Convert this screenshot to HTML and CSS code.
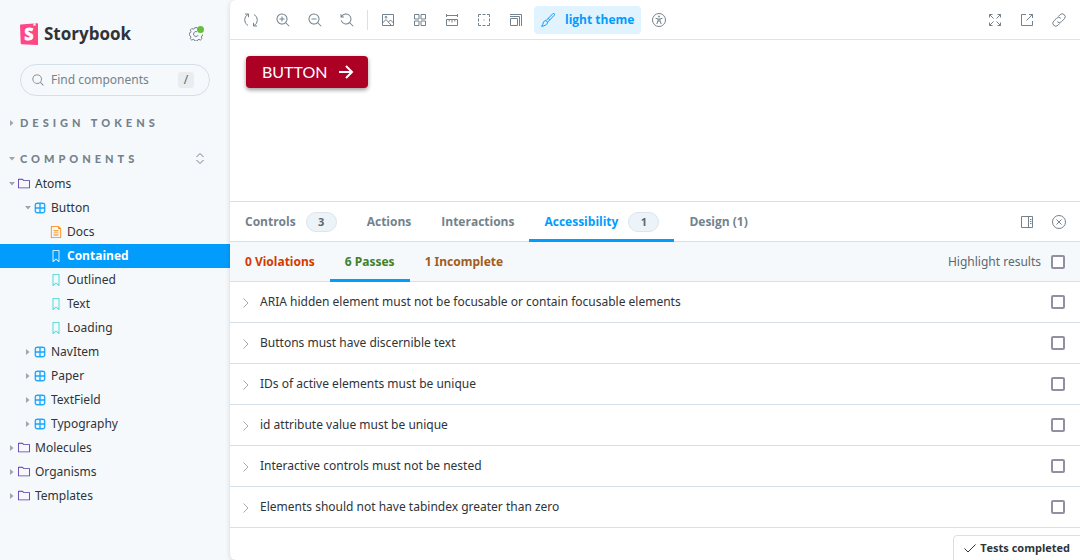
FILE: index.html
```html
<!DOCTYPE html>
<html lang="en">
<head>
<meta charset="utf-8">
<title>Storybook</title>
<link rel="stylesheet" href="styles.css">
</head>
<body>
<svg class="sprite" aria-hidden="true">
  <symbol id="folder" viewBox="0 0 14 14"><path d="M6.586 3.504l-1.5-1.5H1v9h12v-7.5H6.586zm.414-1L5.793 1.297a1 1 0 00-.707-.293H.5a.5.5 0 00-.5.5v10a.5.5 0 00.5.5h13a.5.5 0 00.5-.5v-8.5a.5.5 0 00-.5-.5H7z" fill-rule="evenodd"/></symbol>
  <symbol id="component" viewBox="0 0 14 14"><path d="M3.5 1.004a2.5 2.5 0 00-2.5 2.5v7a2.5 2.5 0 002.5 2.5h7a2.5 2.5 0 002.5-2.5v-7a2.5 2.5 0 00-2.5-2.5h-7zm8.5 5.5H7.5v-4.5h3a1.5 1.5 0 011.5 1.5v3zm0 1v3a1.5 1.5 0 01-1.5 1.5h-3v-4.5H12zm-5.5 4.5v-4.5H2v3a1.5 1.5 0 001.500 1.500h3zM2 6.504h4.500v-4.500h-3a1.500 1.500 0 00-1.500 1.500v3z" fill-rule="evenodd" stroke="currentColor" stroke-width=".4"/></symbol>
  <symbol id="bookmark" viewBox="0 0 14 14"><path d="M3.5 0h7a.5.5 0 01.5.5v13a.5.5 0 01-.454.498.462.462 0 01-.371-.118L7 11.159l-3.175 2.72a.46.46 0 01-.379.118A.5.5 0 013 13.5V.5a.5.5 0 01.5-.5zM4 12.413l2.664-2.284a.454.454 0 01.377-.128.498.498 0 01.284.12L10 12.412V1H4v11.413z" fill-rule="evenodd"/></symbol>
  <symbol id="document" viewBox="0 0 14 14"><path d="M4 5.5a.5.5 0 01.5-.5h5a.5.5 0 010 1h-5a.5.5 0 01-.5-.5zM4.5 7.5a.5.5 0 000 1h5a.5.5 0 000-1h-5zM4 10.5a.5.5 0 01.5-.5h5a.5.5 0 010 1h-5a.5.5 0 01-.5-.5z"/><path d="M1.5 0a.5.5 0 00-.5.5v13a.5.5 0 00.5.5h11a.5.5 0 00.5-.5V3.207a.5.5 0 00-.146-.353L10.146.146A.5.5 0 009.793 0H1.5zM2 1h7.5v2a.5.5 0 00.5.5h2V13H2V1z" fill-rule="evenodd"/></symbol>
  <symbol id="search" viewBox="0 0 14 14"><path d="M9.544 10.206a5.5 5.5 0 11.662-.662.5.5 0 01.148.102l3 3a.5.5 0 01-.708.708l-3-3a.5.5 0 01-.102-.148zM10.5 6a4.5 4.5 0 11-9 0 4.5 4.5 0 019 0z" fill-rule="evenodd"/></symbol>
  <symbol id="zoom-reset" viewBox="0 0 14 14"><path d="M1.5 2.837V1.5a.5.5 0 00-1 0V4a.5.5 0 00.5.5h2.5a.5.5 0 000-1H2.258a4.5 4.5 0 11-.496 4.016.5.5 0 10-.942.337 5.502 5.502 0 008.724 2.353.5.5 0 00.102.148l3 3a.5.5 0 00.708-.708l-3-3a.5.5 0 00-.148-.102A5.5 5.5 0 101.5 2.837z"/></symbol>
  <symbol id="caret" viewBox="0 0 8 8"><path d="M2 1v6l3.500-3z"/></symbol>
</svg>
<div class="app">
  <nav class="sidebar" aria-label="Stories">
    <header class="brand">
      <svg class="logo" viewBox="0 0 18 22" aria-hidden="true"><path d="M.7 1.400 17 .2a.8.8 0 0 1 1 .8v20a.8.8 0 0 1-.9.9L1.500 21.200a.9.9 0 0 1-.8-.9L0 2.200a.8.8 0 0 1 .7-.8z" fill="#ff4785"/><path d="m13.500.4-.1 2.600 1.100-.8 1 .7V.3z" fill="#fff"/><text x="9" y="17" text-anchor="middle" class="logo-letter">S</text></svg>
      <h1 class="brand-name">Storybook</h1>
      <button class="settings" aria-label="Settings">
        <svg class="icon line" viewBox="0 0 14 14"><path d="M8 4.700a2.500 2.500 0 1 0 1.300 3.300"/><path d="M8.600 1.800 8.300.7H5.700L5.300 1.800 4.200 2.200 2.900 1.400 1.200 3.100l.8 1.400-.5 1.200L.3 6v2.200l1 .6.6 1.300-.7 1.400 1.600 1.600 1.400-.8 1.200.5.500 1.200h2.300l.5-1.100 1.300-.5 1.400.7 1.600-1.500-.7-1.500.5-1.200 1.300-.6V6.800"/></svg>
        <span class="dot"></span>
      </button>
    </header>
    <div class="search">
      <svg class="search-icon"><use href="#search"/></svg>
      <input type="text" class="search-input" aria-label="Find components" placeholder="Find components">
      <kbd class="key">/</kbd>
    </div>
    <div class="section"><button class="heading"><svg class="caret"><use href="#caret"/></svg>DESIGN TOKENS</button></div>
    <div class="section">
      <button class="heading"><svg class="caret open"><use href="#caret"/></svg>COMPONENTS</button>
      <button class="expand" aria-label="Expand all"><svg class="icon line" viewBox="0 0 14 14"><path d="M3.500 5 7 1.500l3.500 3.500M3.500 8 7 11.500l3.500-3.500"/></svg></button>
    </div>
    <div class="tree">
      <a class="node" href="#"><svg class="caret open"><use href="#caret"/></svg><svg class="glyph purple"><use href="#folder"/></svg>Atoms</a>
      <a class="node child" href="#"><svg class="caret open"><use href="#caret"/></svg><svg class="glyph blue"><use href="#component"/></svg>Button</a>
      <a class="node leaf" href="#"><svg class="glyph orange"><use href="#document"/></svg>Docs</a>
      <a class="node leaf selected" href="#"><svg class="glyph"><use href="#bookmark"/></svg>Contained</a>
      <a class="node leaf" href="#"><svg class="glyph teal"><use href="#bookmark"/></svg>Outlined</a>
      <a class="node leaf" href="#"><svg class="glyph teal"><use href="#bookmark"/></svg>Text</a>
      <a class="node leaf" href="#"><svg class="glyph teal"><use href="#bookmark"/></svg>Loading</a>
      <a class="node child" href="#"><svg class="caret"><use href="#caret"/></svg><svg class="glyph blue"><use href="#component"/></svg>NavItem</a>
      <a class="node child" href="#"><svg class="caret"><use href="#caret"/></svg><svg class="glyph blue"><use href="#component"/></svg>Paper</a>
      <a class="node child" href="#"><svg class="caret"><use href="#caret"/></svg><svg class="glyph blue"><use href="#component"/></svg>TextField</a>
      <a class="node child" href="#"><svg class="caret"><use href="#caret"/></svg><svg class="glyph blue"><use href="#component"/></svg>Typography</a>
      <a class="node" href="#"><svg class="caret"><use href="#caret"/></svg><svg class="glyph purple"><use href="#folder"/></svg>Molecules</a>
      <a class="node" href="#"><svg class="caret"><use href="#caret"/></svg><svg class="glyph purple"><use href="#folder"/></svg>Organisms</a>
      <a class="node" href="#"><svg class="caret"><use href="#caret"/></svg><svg class="glyph purple"><use href="#folder"/></svg>Templates</a>
    </div>
  </nav>
  <main class="main">
    <div class="toolbar">
      <button class="tool" aria-label="Remount"><svg class="icon line" viewBox="0 0 14 14"><path d="M1 1h3.500v3.200M4.300 1.200A6.300 6.300 0 0 0 4 12.500M13 13H9.500V9.800M9.700 12.800A6.300 6.300 0 0 0 10 1.500"/></svg></button>
      <button class="tool" aria-label="Zoom in"><svg class="icon" viewBox="0 0 14 14"><use href="#search"/><path d="M5.500 3.500h1v2h2v1h-2v2h-1v-2h-2v-1h2z"/></svg></button>
      <button class="tool" aria-label="Zoom out"><svg class="icon" viewBox="0 0 14 14"><use href="#search"/><path d="M3.500 5.500h5v1h-5z"/></svg></button>
      <button class="tool" aria-label="Reset zoom"><svg class="icon"><use href="#zoom-reset"/></svg></button>
      <span class="divider"></span>
      <button class="tool" aria-label="Background"><svg class="icon line" viewBox="0 0 14 14"><path d="M1.500 1.500h11v11h-11zM1.500 10 5 6.500l5 5.500M7.500 9 9.500 7l3 3"/><circle cx="5" cy="4.200" r=".9"/></svg></button>
      <button class="tool" aria-label="Grid"><svg class="icon line" viewBox="0 0 14 14"><path d="M1.500 1.500h4.500v4.500h-4.500zM8 1.500h4.500v4.500h-4.500zM1.500 8h4.500v4.500h-4.500zM8 8h4.500v4.500h-4.500z"/></svg></button>
      <button class="tool" aria-label="Measure"><svg class="icon line" viewBox="0 0 14 14"><path d="M1.500 1v3M12.500 1v3M1.500 2.500h11M1.500 6.500h11v6h-11zM4.200 6.500v2M7 6.500v3M9.800 6.500v2"/></svg></button>
      <button class="tool" aria-label="Outline"><svg class="icon line" viewBox="0 0 14 14"><path d="M1.500 4V1.500H4M10 1.500h2.500V4M12.500 10v2.500H10M4 12.500H1.500V10M5.500 1.500h3M5.500 12.500h3M1.500 5.500v3M12.500 5.500v3M6.500 7h1"/></svg></button>
      <button class="tool" aria-label="Viewport"><svg class="icon line" viewBox="0 0 14 14"><path d="M1.500 5.500h7v7h-7zM1 3.500h9.500V13M1 1.500h11.500V13"/></svg></button>
      <button class="tool theme"><svg class="icon line" viewBox="0 0 14 14"><path d="M13.300.7c-.5-.4-1.200-.3-1.600.1L5 7.600l1.500 1.600L13.300 2.300c.4-.5.4-1.200 0-1.600zM5 7.600c-1.400 0-2.400.8-2.700 2.200-.2 1.200-.7 2.200-1.700 3.500 1.500-.1 3-.5 4.300-1.400 1-.7 1.600-1.600 1.600-2.700M7.200 5.400l1.500 1.500"/></svg>light theme</button>
      <button class="tool" aria-label="Vision simulator"><svg class="icon line" viewBox="0 0 14 14"><circle cx="7" cy="7" r="6.500"/><circle cx="7" cy="3.500" r=".6"/><path d="M3.500 5.200 6 6v1.800L4.800 11M10.500 5.200 8 6v1.800L9.200 11M6 6h2M6 8h2"/></svg></button>
      <span class="spacer"></span>
      <button class="tool" aria-label="Full screen"><svg class="icon line" viewBox="0 0 14 14"><path d="M1.500 4.500v-3h3M9.500 1.500h3v3M12.500 9.500v3h-3M4.500 12.500h-3v-3M1.500 1.500l4 4M12.500 1.500l-4 4M12.500 12.500l-4-4M1.500 12.500l4-4"/></svg></button>
      <button class="tool" aria-label="Open in new tab"><svg class="icon line" viewBox="0 0 14 14"><path d="M6 1.500H1.500v11h11V8M9 1.500h3.500V5M12.500 1.500l-6 6"/></svg></button>
      <button class="tool" aria-label="Copy link"><svg class="icon line" viewBox="0 0 14 14"><path d="m6.200 3.600 1.900-1.900a2.900 2.900 0 0 1 4.200 4.200L9.400 8.700a2.900 2.900 0 0 1-4.200 0M7.800 10.400l-1.900 1.900a2.900 2.900 0 0 1-4.200-4.200l2.900-2.800a2.900 2.900 0 0 1 4.200 0"/></svg></button>
    </div>
    <section class="canvas">
      <button class="contained">BUTTON<svg class="arrow" viewBox="0 0 16 16"><path d="M1 8h13M8 2l6 6-6 6"/></svg></button>
    </section>
    <section class="panel">
      <div class="tabs">
        <button class="tab">Controls<span class="badge">3</span></button>
        <button class="tab">Actions</button>
        <button class="tab">Interactions</button>
        <button class="tab active">Accessibility<span class="badge">1</span></button>
        <button class="tab">Design (1)</button>
        <span class="spacer"></span>
        <button class="tool" aria-label="Change orientation"><svg class="icon line" viewBox="0 0 14 14"><path d="M1.500 1.500h11v11h-11zM8.500 1.500v11M10 4.500h1.500M10 6.500h1.500M10 8.500h1.500"/></svg></button>
        <button class="tool" aria-label="Hide addons"><svg class="icon line" viewBox="0 0 14 14"><circle cx="7" cy="7" r="6.500"/><path d="m4.500 4.500 5 5M9.500 4.500l-5 5"/></svg></button>
      </div>
      <div class="tabs results">
        <button class="tab red">0 Violations</button>
        <button class="tab green active">6 Passes</button>
        <button class="tab brown">1 Incomplete</button>
        <span class="spacer"></span>
        <label class="highlight">Highlight results<input class="check" type="checkbox"></label>
      </div>
      <div class="rule"><button class="rule-name" id="r1"><svg class="chevron" viewBox="0 0 10 12"><path d="M3.500 2.500 8 7l-4.500 4.500"/></svg>ARIA hidden element must not be focusable or contain focusable elements</button><input class="check" type="checkbox" aria-labelledby="r1"></div>
      <div class="rule"><button class="rule-name" id="r2"><svg class="chevron" viewBox="0 0 10 12"><path d="M3.500 2.500 8 7l-4.500 4.500"/></svg>Buttons must have discernible text</button><input class="check" type="checkbox" aria-labelledby="r2"></div>
      <div class="rule"><button class="rule-name" id="r3"><svg class="chevron" viewBox="0 0 10 12"><path d="M3.500 2.500 8 7l-4.500 4.500"/></svg>IDs of active elements must be unique</button><input class="check" type="checkbox" aria-labelledby="r3"></div>
      <div class="rule"><button class="rule-name" id="r4"><svg class="chevron" viewBox="0 0 10 12"><path d="M3.500 2.500 8 7l-4.500 4.500"/></svg>id attribute value must be unique</button><input class="check" type="checkbox" aria-labelledby="r4"></div>
      <div class="rule"><button class="rule-name" id="r5"><svg class="chevron" viewBox="0 0 10 12"><path d="M3.500 2.500 8 7l-4.500 4.500"/></svg>Interactive controls must not be nested</button><input class="check" type="checkbox" aria-labelledby="r5"></div>
      <div class="rule"><button class="rule-name" id="r6"><svg class="chevron" viewBox="0 0 10 12"><path d="M3.500 2.500 8 7l-4.500 4.500"/></svg>Elements should not have tabindex greater than zero</button><input class="check" type="checkbox" aria-labelledby="r6"></div>
    </section>
    <button class="status"><svg class="tick" viewBox="0 0 12 12"><path d="m.500 6.500 3.500 3.500 7.500-7.500"/></svg>Tests completed</button>
  </main>
</div>
</body>
</html>
```

FILE: styles.css
```css
* {
  box-sizing: border-box;
}

body {
  margin: 0;
  background: #f6f9fc;
  color: #2e3438;
  font: 12px/20px "Noto Sans", "Open Sans", sans-serif;
}

button,
input,
kbd {
  margin: 0;
  padding: 0;
  border: 0;
  background: none;
  color: inherit;
  font: inherit;
}

svg {
  flex: none;
  fill: currentColor;
}

.sprite {
  position: absolute;
  width: 0;
  height: 0;
}

.app {
  display: grid;
  grid-template-columns: 230px 1fr;
  min-height: 100vh;
}

.icon {
  display: block;
  width: 14px;
  height: 14px;
}

.line {
  fill: none;
  stroke: currentColor;
  stroke-width: 1;
}

/* Sidebar */

.sidebar {
  padding-top: 20px;
}

.brand {
  display: flex;
  align-items: center;
  height: 28px;
  padding: 0 20px;
}

.logo {
  width: 18px;
  height: 22px;
}

.logo-letter {
  fill: #fff;
  stroke: #fff;
  stroke-width: 1px;
  font: 700 16px "Open Sans", sans-serif;
}

.brand-name {
  flex: 1;
  margin: 0 0 0 6px;
  font: 700 17px/24px "Open Sans", sans-serif;
}

.settings {
  position: relative;
  padding: 7px;
  color: #73828c;
}

.dot {
  position: absolute;
  top: 6px;
  right: 6px;
  width: 7px;
  height: 7px;
  border-radius: 50%;
  background: #66bf3c;
}

.search {
  display: flex;
  align-items: center;
  height: 32px;
  margin: 16px 20px 13px;
  padding: 0 15px 0 11px;
  border: 1px solid #d3dfe9;
  border-radius: 16px;
  color: #73828c;
}

.search-icon {
  width: 12px;
  height: 12px;
}

.search-input {
  flex: 1;
  min-width: 0;
  margin-left: 7px;
  outline: 0;
}

.search-input::placeholder {
  color: #73828c;
  opacity: 1;
}

.key {
  width: 16px;
  border-radius: 3px;
  background: #e9edf0;
  color: #5c6870;
  line-height: 16px;
  text-align: center;
}

.section {
  display: flex;
  align-items: center;
  justify-content: space-between;
  height: 28px;
  margin-bottom: 8px;
  padding: 0 16px 0 8px;
  color: #73828c;
}

.section + .section {
  height: 27px;
  margin-bottom: 0;
}

.heading {
  display: flex;
  align-items: center;
  gap: 4px;
  font-family: Lato, sans-serif;
  font-size: 11px;
  font-weight: 900;
  letter-spacing: 4px;
}

.expand {
  padding: 7px;
}

.caret {
  width: 8px;
  height: 8px;
  color: #9aa7b0;
}

.open {
  transform: rotate(90deg);
}

.node {
  display: flex;
  align-items: center;
  height: 24px;
  padding-left: 8px;
  color: #2e3438;
  text-decoration: none;
}

.child {
  padding-left: 24px;
}

.leaf {
  padding-left: 48px;
}

.glyph {
  width: 12px;
  height: 12px;
  margin: 0 5px 0 2px;
}

.purple {
  color: #5a36ac;
}

.blue {
  color: #029cfd;
}

.orange {
  color: #ff8300;
}

.teal {
  color: #37d5d3;
}

.selected {
  background: #029cfd;
  color: #fff;
  font-family: "Open Sans", sans-serif;
  font-weight: 700;
}

/* Main column */

.main {
  position: relative;
  display: flex;
  flex-direction: column;
  min-width: 0;
  overflow: hidden;
  border-radius: 6px 0 0 6px;
  background: #fff;
  box-shadow: 0 1px 5px rgba(0, 0, 0, 0.15);
}

.toolbar {
  display: flex;
  align-items: center;
  gap: 4px;
  height: 40px;
  padding: 0 7px;
  border-bottom: 1px solid #dde3e9;
}

.tool {
  padding: 7px;
  color: #73828c;
}

.divider {
  width: 1px;
  height: 20px;
  margin: 0 2px;
  background: #d9e0e6;
}

.theme {
  display: flex;
  align-items: center;
  gap: 10px;
  height: 28px;
  border-radius: 4px;
  background: #e1f3ff;
  color: #029cfd;
  font-family: "Open Sans", sans-serif;
  font-weight: 700;
}

.spacer {
  flex: 1;
}

.canvas {
  flex: 1;
  padding: 16px;
}

.contained {
  display: flex;
  align-items: center;
  gap: 10px;
  height: 32px;
  padding: 0 14px 0 16px;
  border-radius: 4px;
  background: #ad0025;
  box-shadow: 0 2px 4px rgba(0, 0, 0, 0.4);
  color: #fff;
  font-family: Lato, sans-serif;
  font-size: 16px;
}

.arrow {
  width: 16px;
  height: 16px;
  fill: none;
  stroke: #fff;
  stroke-width: 2;
}

.panel {
  padding-bottom: 32px;
  border-top: 1px solid #d6e0e8;
}

.tabs {
  display: flex;
  align-items: center;
  gap: 4px;
  height: 40px;
  padding-right: 7px;
  border-bottom: 1px solid #d6e0e8;
}

.tab {
  display: flex;
  align-items: center;
  gap: 10px;
  height: 40px;
  margin-right: -4px;
  padding: 0 15px;
  border-top: 3px solid transparent;
  border-bottom: 3px solid transparent;
  color: #73828c;
  font-family: "Open Sans", sans-serif;
  font-weight: 700;
}

.active {
  border-bottom-color: #029cfd;
  color: #029cfd;
}

.badge {
  width: 31px;
  border: 1px solid #dce5ec;
  border-radius: 10px;
  background: #ecf4f9;
  color: #5c6870;
  font-size: 11px;
  line-height: 18px;
}

.results {
  padding-right: 15px;
  background: #f6f9fc;
}

.results .tab {
  font-family: "Noto Sans", sans-serif;
}

.red {
  color: #d43900;
}

.green {
  color: #448028;
}

.brown {
  color: #a15c20;
}

.highlight {
  display: flex;
  align-items: center;
  gap: 10px;
  color: #5c6870;
}

.check {
  appearance: none;
  width: 14px;
  height: 14px;
  border: 2px solid #918fa1;
  border-radius: 2px;
  background: #fff;
}

.rule {
  display: flex;
  align-items: center;
  justify-content: space-between;
  height: 41px;
  padding: 0 15px 0 10px;
  border-bottom: 1px solid #d6e0e8;
}

.rule-name {
  display: flex;
  align-items: center;
  gap: 10px;
}

.chevron {
  width: 10px;
  height: 12px;
  fill: none;
  stroke: #9facb5;
}

.status {
  position: absolute;
  right: -1px;
  bottom: -1px;
  display: flex;
  align-items: center;
  gap: 4px;
  height: 26px;
  padding: 0 10px;
  border: 1px solid #d6e0e8;
  border-top-left-radius: 4px;
  background: #fff;
  font-family: "Open Sans", sans-serif;
  font-size: 11px;
  font-weight: 700;
}

.tick {
  width: 12px;
  height: 12px;
  fill: none;
  stroke: currentColor;
}
```
